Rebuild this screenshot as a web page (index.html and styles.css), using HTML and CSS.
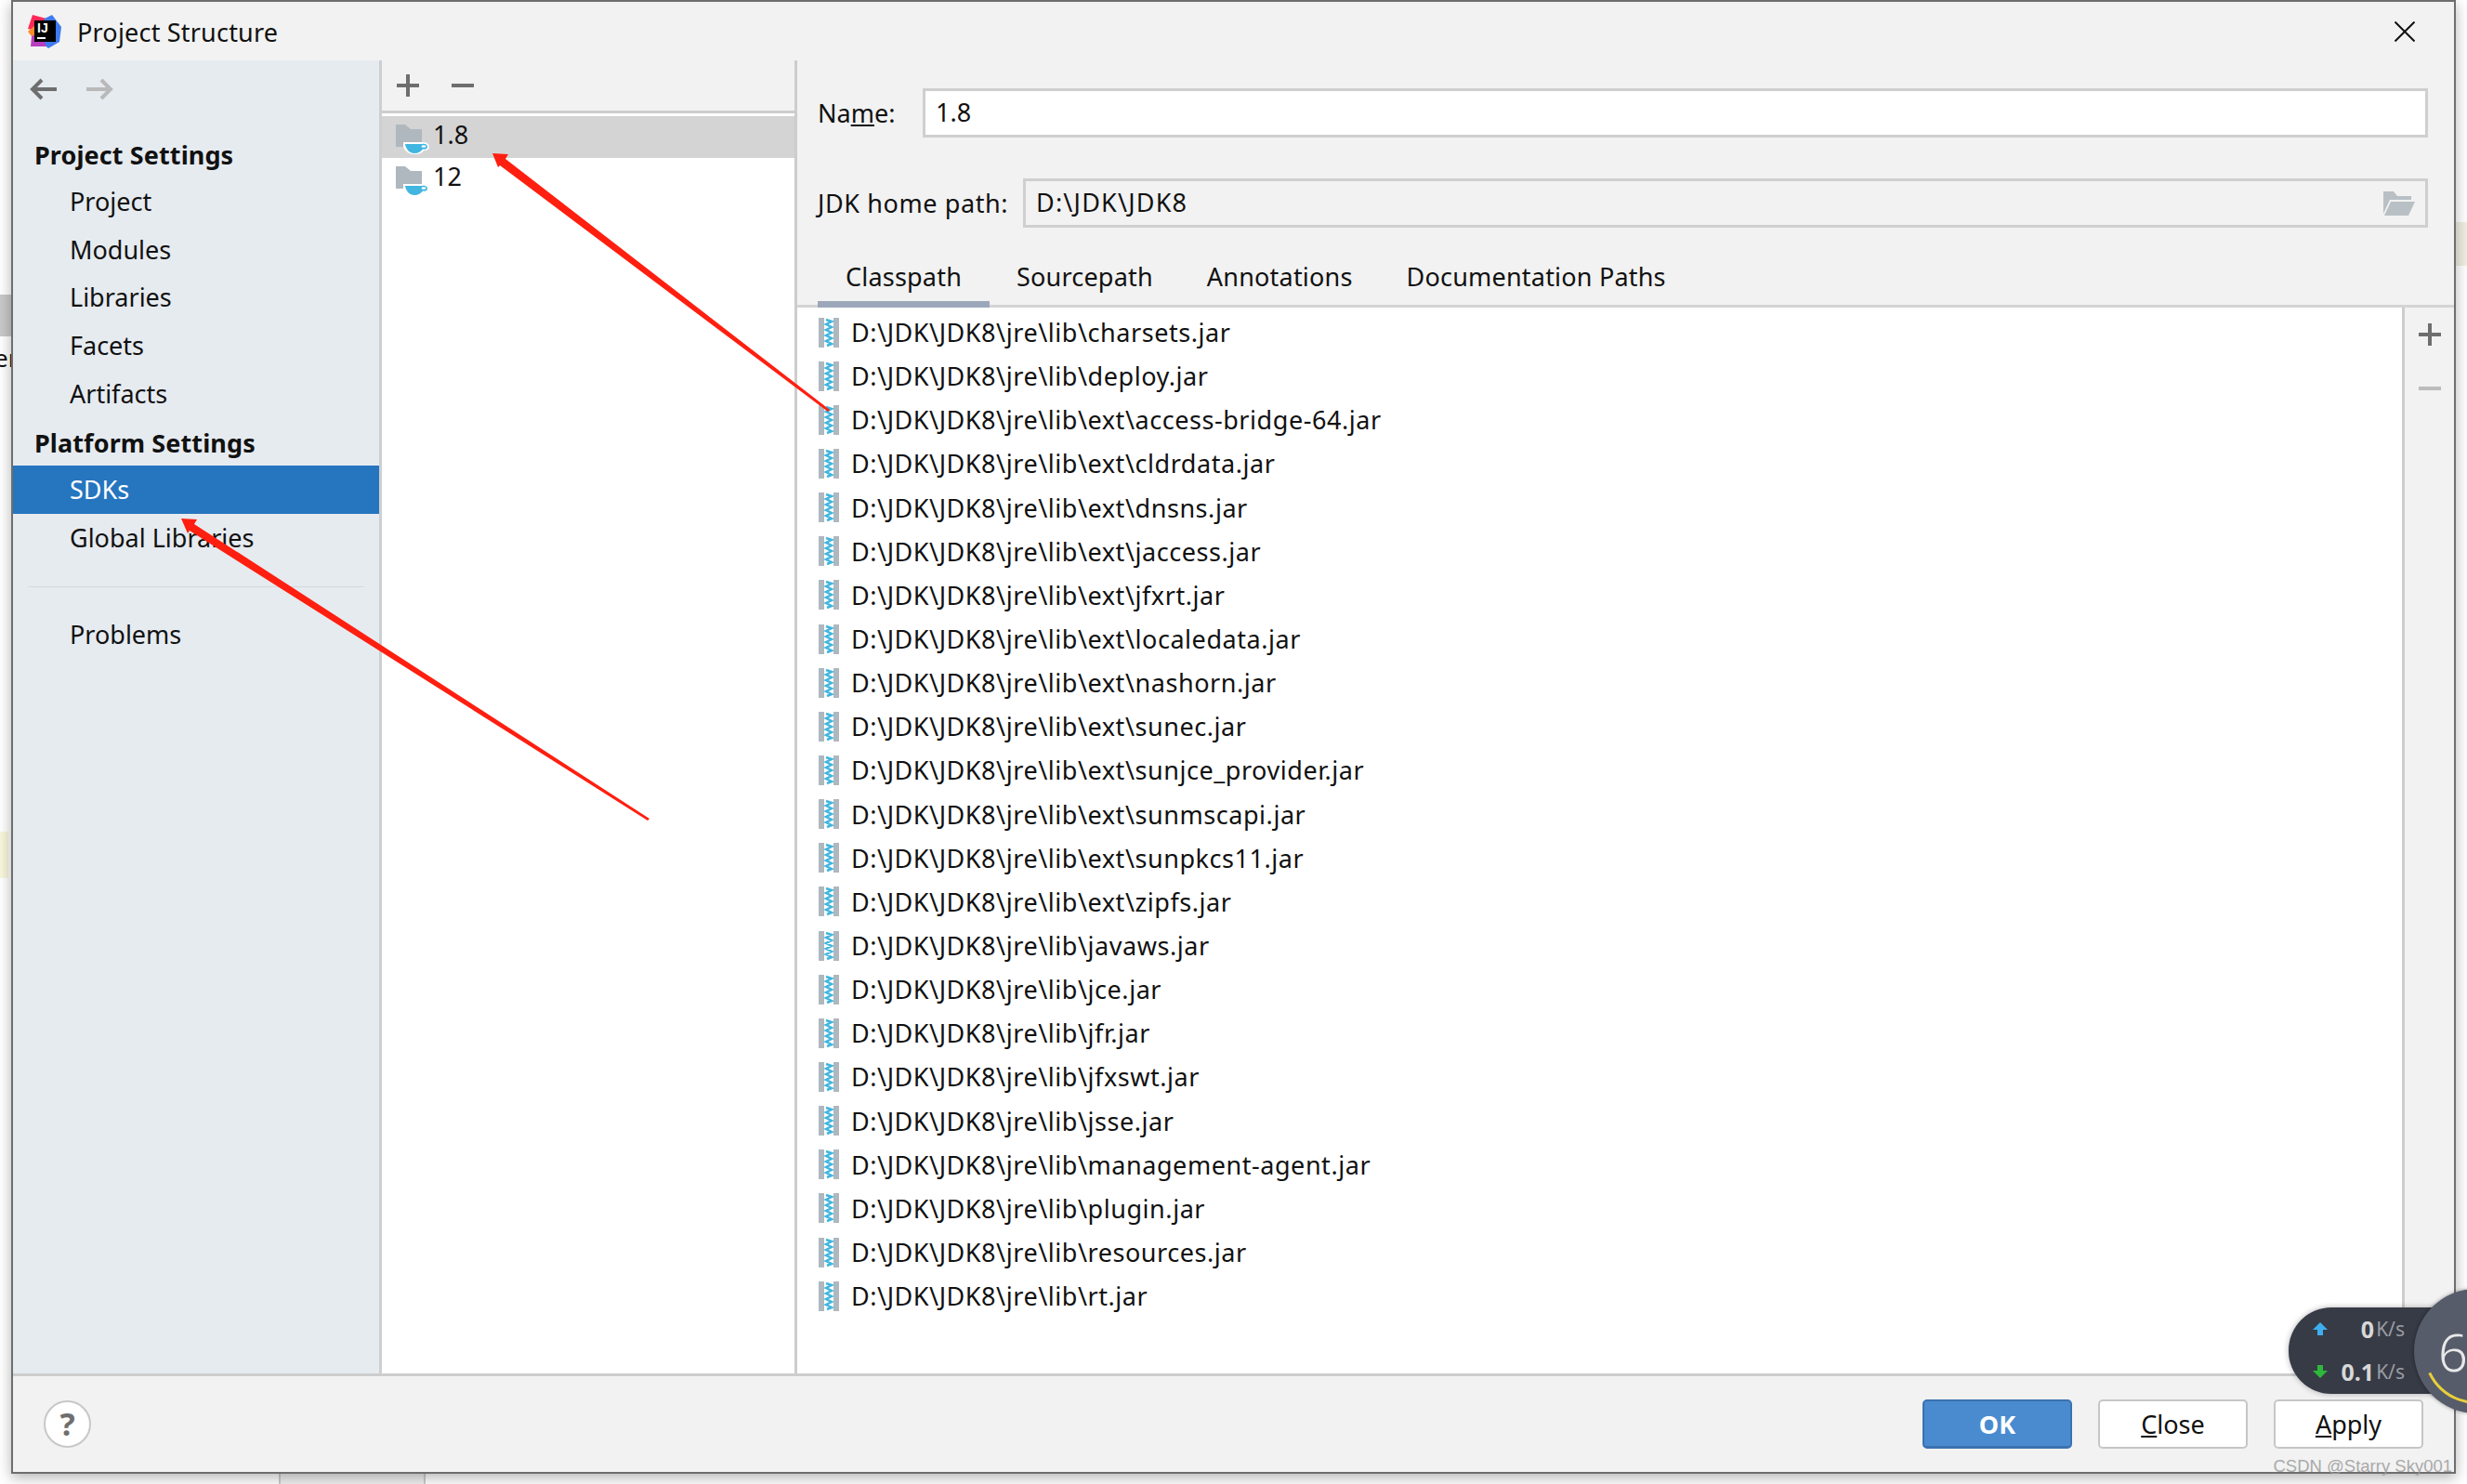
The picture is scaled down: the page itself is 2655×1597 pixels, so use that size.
FILE: index.html
```html
<!DOCTYPE html>
<html lang="en">
<head>
  <meta charset="UTF-8" />
  <title>Project Structure</title>
  <link rel="stylesheet" href="styles.css">
</head>
<body>
  <!-- bits of the window behind the dialog -->
  <div class="behind behind-grey"></div>
  <div class="behind behind-text">er</div>
  <div class="behind behind-yellow"></div>
  <div class="behind behind-beige"></div>
  <div class="behind behind-tab"></div>

  <div class="dialog">
    <div class="titlebar">
      <svg class="logo" width="37" height="37" viewBox="0 0 37 37">
        <polygon points="5,1 20,5 18,20 0,16" fill="#fe2857"/>
        <polygon points="18,5 26,1 36,14 34,30 22,37 12,28" fill="#3d7bf0"/>
        <polygon points="0,19 8,12 12,26 4,24" fill="#fe8a2a"/>
        <polygon points="4,24 14,20 20,35 3,35" fill="#b83ec0"/>
        <rect x="7" y="7" width="23" height="23" fill="#000"/>
        <text class="logo-text" x="10" y="20">IJ</text>
        <rect x="10" y="25" width="9" height="2" fill="#fff"/>
      </svg>
      <span class="title">Project Structure</span>
      <svg class="close-x" width="22" height="22" viewBox="0 0 22 22"><path d="M0.5 0.5L21.5 21.5M21.5 0.5L0.5 21.5" stroke="#111" stroke-width="2" fill="none"/></svg>
    </div>

    <div class="content">
      <nav class="sidebar">
        <div class="nav-arrows">
          <svg width="32" height="26" viewBox="0 0 32 26"><path d="M30 13H4M14 3L4 13L14 23" stroke="#6e6e6e" stroke-width="4" fill="none"/></svg>
          <svg width="32" height="26" viewBox="0 0 32 26"><path d="M2 13H28M18 3L28 13L18 23" stroke="#b9b9b9" stroke-width="4" fill="none"/></svg>
        </div>
        <div class="nav-head">Project Settings</div>
        <div class="nav-item">Project</div>
        <div class="nav-item">Modules</div>
        <div class="nav-item">Libraries</div>
        <div class="nav-item">Facets</div>
        <div class="nav-item">Artifacts</div>
        <div class="nav-head nav-head2">Platform Settings</div>
        <div class="nav-item selected">SDKs</div>
        <div class="nav-item">Global Libraries</div>
        <div class="nav-sep"></div>
        <div class="nav-item">Problems</div>
      </nav>

      <div class="sdk-panel">
        <div class="sdk-toolbar">
          <svg width="24" height="24" viewBox="0 0 24 24"><path d="M12 0V24M0 12H24" stroke="#6e6e6e" stroke-width="4"/></svg>
          <svg width="24" height="24" viewBox="0 0 24 24"><path d="M0 12H24" stroke="#6e6e6e" stroke-width="4"/></svg>
        </div>
        <div class="sdk-list">
          <div class="sdk-row active">
            <svg class="sdk-icon" width="36" height="32" viewBox="0 0 36 32"><use href="#jdk-folder"/></svg>
            <span>1.8</span>
          </div>
          <div class="sdk-row">
            <svg class="sdk-icon" width="36" height="32" viewBox="0 0 36 32"><use href="#jdk-folder"/></svg>
            <span>12</span>
          </div>
        </div>
      </div>

      <div class="detail">
        <div class="form-row name-row">
          <label>Na<u>m</u>e:</label>
          <div class="field white">1.8</div>
        </div>
        <div class="form-row home-row">
          <label>JDK home path:</label>
          <div class="field"><span class="home-path">D:\JDK\JDK8</span>
            <svg class="folder-open" width="34" height="26" viewBox="0 0 34 26">
              <path d="M0 0H11L15 5H30V9H7L0 24Z" fill="#b9c0c5"/>
              <path d="M8 11H34L27 26H1Z" fill="#b9c0c5"/>
            </svg>
          </div>
        </div>
        <div class="tabs">
          <div class="tab current">Classpath</div>
          <div class="tab">Sourcepath</div>
          <div class="tab">Annotations</div>
          <div class="tab">Documentation Paths</div>
        </div>
        <div class="paths">
          <div class="jar-list">
            <div class="jar"><svg width="22" height="32" viewBox="0 0 22 32"><use href="#jar"/></svg>D:\JDK\JDK8\jre\lib\charsets.jar</div>
            <div class="jar"><svg width="22" height="32" viewBox="0 0 22 32"><use href="#jar"/></svg>D:\JDK\JDK8\jre\lib\deploy.jar</div>
            <div class="jar"><svg width="22" height="32" viewBox="0 0 22 32"><use href="#jar"/></svg>D:\JDK\JDK8\jre\lib\ext\access-bridge-64.jar</div>
            <div class="jar"><svg width="22" height="32" viewBox="0 0 22 32"><use href="#jar"/></svg>D:\JDK\JDK8\jre\lib\ext\cldrdata.jar</div>
            <div class="jar"><svg width="22" height="32" viewBox="0 0 22 32"><use href="#jar"/></svg>D:\JDK\JDK8\jre\lib\ext\dnsns.jar</div>
            <div class="jar"><svg width="22" height="32" viewBox="0 0 22 32"><use href="#jar"/></svg>D:\JDK\JDK8\jre\lib\ext\jaccess.jar</div>
            <div class="jar"><svg width="22" height="32" viewBox="0 0 22 32"><use href="#jar"/></svg>D:\JDK\JDK8\jre\lib\ext\jfxrt.jar</div>
            <div class="jar"><svg width="22" height="32" viewBox="0 0 22 32"><use href="#jar"/></svg>D:\JDK\JDK8\jre\lib\ext\localedata.jar</div>
            <div class="jar"><svg width="22" height="32" viewBox="0 0 22 32"><use href="#jar"/></svg>D:\JDK\JDK8\jre\lib\ext\nashorn.jar</div>
            <div class="jar"><svg width="22" height="32" viewBox="0 0 22 32"><use href="#jar"/></svg>D:\JDK\JDK8\jre\lib\ext\sunec.jar</div>
            <div class="jar"><svg width="22" height="32" viewBox="0 0 22 32"><use href="#jar"/></svg>D:\JDK\JDK8\jre\lib\ext\sunjce_provider.jar</div>
            <div class="jar"><svg width="22" height="32" viewBox="0 0 22 32"><use href="#jar"/></svg>D:\JDK\JDK8\jre\lib\ext\sunmscapi.jar</div>
            <div class="jar"><svg width="22" height="32" viewBox="0 0 22 32"><use href="#jar"/></svg>D:\JDK\JDK8\jre\lib\ext\sunpkcs11.jar</div>
            <div class="jar"><svg width="22" height="32" viewBox="0 0 22 32"><use href="#jar"/></svg>D:\JDK\JDK8\jre\lib\ext\zipfs.jar</div>
            <div class="jar"><svg width="22" height="32" viewBox="0 0 22 32"><use href="#jar"/></svg>D:\JDK\JDK8\jre\lib\javaws.jar</div>
            <div class="jar"><svg width="22" height="32" viewBox="0 0 22 32"><use href="#jar"/></svg>D:\JDK\JDK8\jre\lib\jce.jar</div>
            <div class="jar"><svg width="22" height="32" viewBox="0 0 22 32"><use href="#jar"/></svg>D:\JDK\JDK8\jre\lib\jfr.jar</div>
            <div class="jar"><svg width="22" height="32" viewBox="0 0 22 32"><use href="#jar"/></svg>D:\JDK\JDK8\jre\lib\jfxswt.jar</div>
            <div class="jar"><svg width="22" height="32" viewBox="0 0 22 32"><use href="#jar"/></svg>D:\JDK\JDK8\jre\lib\jsse.jar</div>
            <div class="jar"><svg width="22" height="32" viewBox="0 0 22 32"><use href="#jar"/></svg>D:\JDK\JDK8\jre\lib\management-agent.jar</div>
            <div class="jar"><svg width="22" height="32" viewBox="0 0 22 32"><use href="#jar"/></svg>D:\JDK\JDK8\jre\lib\plugin.jar</div>
            <div class="jar"><svg width="22" height="32" viewBox="0 0 22 32"><use href="#jar"/></svg>D:\JDK\JDK8\jre\lib\resources.jar</div>
            <div class="jar"><svg width="22" height="32" viewBox="0 0 22 32"><use href="#jar"/></svg>D:\JDK\JDK8\jre\lib\rt.jar</div>
          </div>
          <div class="side-tools">
            <svg width="24" height="24" viewBox="0 0 24 24"><path d="M12 0V24M0 12H24" stroke="#6e6e6e" stroke-width="4"/></svg>
            <svg width="24" height="24" viewBox="0 0 24 24"><path d="M0 12H24" stroke="#bcbcbc" stroke-width="4"/></svg>
          </div>
        </div>
      </div>
    </div>

    <div class="footer">
      <div class="help">?</div>
      <div class="buttons">
        <div class="btn primary">OK</div>
        <div class="btn"><u>C</u>lose</div>
        <div class="btn"><u>A</u>pply</div>
      </div>
    </div>
  </div>

  <!-- speed widget floating over the dialog -->
  <div class="speed">
    <div class="speed-row">
      <svg width="16" height="14" viewBox="0 0 16 14"><path d="M8 0L16 8H11V14H5V8H0Z" fill="#3eaef0"/></svg>
      <span class="speed-num">0</span><span class="speed-unit">K/s</span>
    </div>
    <div class="speed-row">
      <svg width="16" height="14" viewBox="0 0 16 14"><path d="M8 14L16 6H11V0H5V6H0Z" fill="#2eb83a"/></svg>
      <span class="speed-num">0.1</span><span class="speed-unit">K/s</span>
    </div>
  </div>
  <div class="gauge">
    <span>6</span>
  </div>
  <div class="watermark">CSDN @Starry Sky001</div>

  <!-- red arrows drawn on top of the screenshot -->
  <svg class="arrows" width="2655" height="1597" viewBox="0 0 2655 1597">
    <polygon points="530,165 547,166 544,171 893,441 891,443 538,178 536,180" fill="#fe1f10"/>
    <polygon points="195,558 212,559 209,564 699,881 697,883 204,571 202,574" fill="#fe1f10"/>
  </svg>

  <svg class="defs" width="0" height="0">
    <defs>
      <g id="jdk-folder">
        <path d="M0 0H10L16 5H28V24H0Z" fill="#afb8be"/>
        <path d="M8 19H29C33 19 36 21 36 24C36 27 33 28 30 28C28 31 25 32 20 32C14 32 10 29 8 24Z" fill="#fff"/>
        <path d="M10 21H28C32 20 34 22 34 24C34 26 32 27 29 26.500C27 29 24 31 20 31C15 31 11 27 10 21Z" fill="#40b6e0"/>
        <ellipse cx="30" cy="23.500" rx="2.500" ry="1.200" fill="#fff"/>
      </g>
      <g id="jar">
        <rect x="0" y="0" width="6" height="32" fill="#afb8be"/>
        <rect x="16" y="0" width="6" height="32" fill="#afb8be"/>
        <path d="M8 2L14 4L8 7L14 10L8 13L14 16L8 19L14 22L8 25L14 28L9 30" stroke="#40b6e0" stroke-width="2.500" fill="none"/>
      </g>
    </defs>
  </svg>
</body>
</html>
```

FILE: styles.css
```css
html, body {
  margin: 0;
  padding: 0;
  width: 2655px;
  height: 1597px;
  overflow: hidden;
  background: #fff;
  font-family: 'Noto Sans', sans-serif;
  font-size: 27px;
  color: #111;
}

.behind {
  position: absolute;
}

.behind-grey {
  left: 0;
  top: 317px;
  width: 13px;
  height: 45px;
  background: #c9c9c9;
}

.behind-text {
  left: -6px;
  top: 368px;
  font-size: 26px;
  line-height: 34px;
}

.behind-yellow {
  left: 0;
  top: 895px;
  width: 9px;
  height: 50px;
  background: #f8f7dc;
}

.behind-beige {
  left: 2642px;
  top: 239px;
  width: 13px;
  height: 47px;
  background: #eeeee2;
}

.behind-tab {
  left: 300px;
  top: 1584px;
  width: 154px;
  height: 13px;
  border-left: 2px solid #ccc;
  border-right: 2px solid #ccc;
  background: #f0f0f0;
}

.dialog {
  position: absolute;
  left: 12px;
  top: 0;
  width: 2631px;
  height: 1586px;
  box-sizing: border-box;
  border: 2px solid #6e6e6e;
  background: #f2f2f2;
  box-shadow: 0 4px 14px rgba(0,0,0,0.3);
  display: flex;
  flex-direction: column;
}

.titlebar {
  height: 63px;
  display: flex;
  align-items: center;
  padding: 0 42px 0 16px;
  flex-shrink: 0;
}

.logo {
  margin-right: 16px;
}

.logo-text {
  font-family: 'Liberation Sans', sans-serif;
  font-size: 14px;
  font-weight: bold;
  fill: #fff;
}

.title {
  flex: 1;
  letter-spacing: 0.200px;
  padding-top: 1px;
}

.content {
  flex: 1;
  display: flex;
  min-height: 0;
}

.sidebar {
  width: 394px;
  background: #e6ebf0;
  border-right: 3px solid #cdd0d3;
  flex-shrink: 0;
}

.nav-arrows {
  height: 59px;
  box-sizing: border-box;
  display: flex;
  align-items: center;
  gap: 28px;
  padding: 3px 0 0 17px;
}

.nav-head {
  margin-top: 18px;
  padding-left: 23px;
  height: 49px;
  line-height: 49px;
  font-weight: bold;
  letter-spacing: 0.100px;
}

.nav-head2 {
  margin-top: 3px;
}

.nav-item {
  padding-left: 61px;
  height: 51.700px;
  line-height: 51.700px;
}

.nav-item.selected {
  background: #2675bf;
  color: #fff;
}

.nav-sep {
  height: 1px;
  margin: 26px 16px 25px;
  background: #d8d8da;
}

.sdk-panel {
  width: 444px;
  border-right: 3px solid #cdcdcd;
  flex-shrink: 0;
  display: flex;
  flex-direction: column;
}

.sdk-toolbar {
  height: 54px;
  border-bottom: 3px solid #cdcdcd;
  display: flex;
  align-items: center;
  gap: 35px;
  padding-left: 16px;
}

.sdk-list {
  flex: 1;
  background: #fff;
  padding-top: 3px;
}

.sdk-row {
  height: 45px;
  display: flex;
  align-items: center;
  padding-left: 15px;
  gap: 4px;
}

.sdk-row span {
  margin-top: -6px;
}

.sdk-icon {
  margin-top: 4px;
}

.sdk-row.active {
  background: #d4d4d4;
}

.detail {
  flex: 1;
  display: flex;
  flex-direction: column;
  min-width: 0;
}

.form-row {
  display: flex;
  align-items: center;
  margin-right: 28px;
  margin-left: 22px;
}

.name-row {
  margin-top: 30px;
}

.name-row label {
  width: 113px;
  flex-shrink: 0;
}

.home-row {
  margin-top: 44px;
}

.home-row label {
  width: 221px;
  flex-shrink: 0;
  letter-spacing: 0.600px;
}

.home-path {
  letter-spacing: 1.200px;
}

.field {
  flex: 1;
  height: 53px;
  box-sizing: border-box;
  border: 3px solid #cfcfcf;
  padding-left: 11px;
  line-height: 45px;
  position: relative;
}

.field.white {
  background: #fff;
}

.folder-open {
  position: absolute;
  right: 11px;
  top: 11px;
}

.tabs {
  display: flex;
  margin-top: 20px;
  height: 66px;
  padding-left: 22px;
  border-bottom: 3px solid #d4d4d4;
  box-sizing: border-box;
  flex-shrink: 0;
  letter-spacing: 0.200px;
}

.tab {
  padding: 14px 29px 0;
  height: 66px;
  box-sizing: border-box;
}

.tab.current {
  padding: 14px 30px 0;
  border-bottom: 7px solid #9ca8ba;
}

.paths {
  flex: 1;
  display: flex;
  min-height: 0;
}

.jar-list {
  flex: 1;
  background: #fff;
  padding-top: 3px;
}

.jar {
  height: 47.150px;
  display: flex;
  align-items: center;
  gap: 13px;
  padding-left: 23px;
  letter-spacing: 0.550px;
}

.side-tools {
  width: 53px;
  border-left: 3px solid #cdcdcd;
  display: flex;
  flex-direction: column;
  align-items: center;
  gap: 34px;
  padding-top: 17px;
  flex-shrink: 0;
}

.footer {
  height: 106px;
  border-top: 3px solid #cdcdcd;
  box-sizing: border-box;
  display: flex;
  align-items: center;
  justify-content: space-between;
  padding: 0 33px 0 33px;
  flex-shrink: 0;
}

.help {
  width: 51px;
  height: 51px;
  box-sizing: border-box;
  border: 2px solid #c8c8c8;
  border-radius: 50%;
  background: #fff;
  color: #6e6e6e;
  font-weight: bold;
  font-size: 34px;
  line-height: 46px;
  text-align: center;
}

.buttons {
  display: flex;
  gap: 28px;
}

.btn {
  width: 161px;
  height: 53px;
  box-sizing: border-box;
  border: 2px solid #c6c6c6;
  border-radius: 5px;
  background: #fff;
  line-height: 49px;
  text-align: center;
}

.btn.primary {
  border-color: #3a72b0;
  border-bottom-width: 3px;
  background: #4a8bd0;
  color: #fff;
  font-weight: bold;
}

.speed {
  position: absolute;
  left: 2463px;
  top: 1407px;
  width: 192px;
  height: 93px;
  border-radius: 46px 0 0 46px;
  background: #373b46;
  box-shadow: 0 0 6px rgba(0,0,0,0.3);
}

.speed-row {
  height: 46px;
  display: flex;
  align-items: center;
  padding-left: 26px;
  width: 125px;
  box-sizing: border-box;
  color: #d8d8d8;
}

.speed-row svg {
  margin-right: auto;
}

.speed-num {
  font-size: 25px;
  font-weight: bold;
}

.speed-unit {
  font-size: 21px;
  color: #9a9ca3;
  margin-left: 2px;
}

.gauge {
  position: absolute;
  left: 2598px;
  top: 1387px;
  width: 134px;
  height: 134px;
  border-radius: 50%;
  background: #575c6b;
  box-shadow: 0 0 4px rgba(0,0,0,0.4);
  color: #e8e8e8;
  font-size: 56px;
  font-weight: 300;
  line-height: 134px;
  padding-left: 26px;
  box-sizing: border-box;
}

.gauge::after {
  content: "";
  position: absolute;
  left: 10px;
  top: 10px;
  width: 114px;
  height: 114px;
  border-radius: 50%;
  border: 3px solid transparent;
  border-bottom-color: #e8cf3a;
  box-sizing: border-box;
  transform: rotate(20deg);
}

.watermark {
  position: absolute;
  right: 16px;
  top: 1568px;
  font-family: 'Liberation Sans', sans-serif;
  font-size: 18.500px;
  line-height: 20px;
  color: #9d9d9d;
  opacity: 0.85;
}

.arrows {
  position: absolute;
  left: 0;
  top: 0;
  pointer-events: none;
}

.defs {
  position: absolute;
}
```
